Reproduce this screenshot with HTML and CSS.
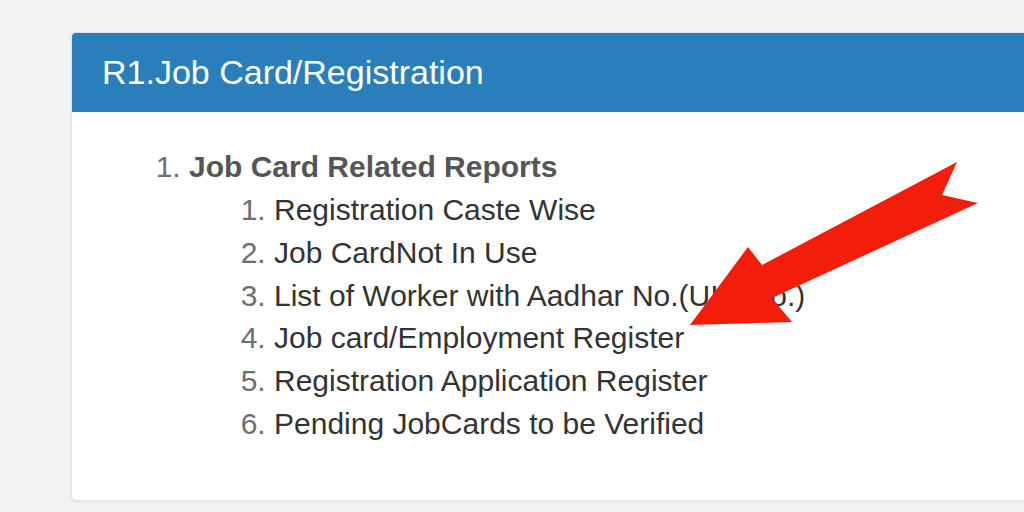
FILE: index.html
```html
<!DOCTYPE html>
<html>
<head>
<meta charset="utf-8">
<link rel="stylesheet" href="styles.css">
</head>
<body>
<div class="page">
  <div class="panel">
    <div class="panel-heading">R1.Job Card/Registration</div>
    <div class="panel-body">
      <ol class="outer">
        <li><b class="group">Job Card Related Reports</b>
          <ol class="inner">
            <li>Registration Caste Wise</li>
            <li>Job CardNot In Use</li>
            <li>List of Worker with Aadhar No.(UID No.)</li>
            <li>Job card/Employment Register</li>
            <li>Registration Application Register</li>
            <li>Pending JobCards to be Verified</li>
          </ol>
        </li>
      </ol>
    </div>
  </div>
  <svg class="arrow" width="1024" height="512" viewBox="0 0 1024 512">
    <polygon points="690,325 748,247 762,265 957,162 942,195 978,203 772,298 792,322" fill="#f21d0a"/>
  </svg>
</div>
</body>
</html>
```
FILE: styles.css
```css
html, body {
  margin: 0;
  padding: 0;
  width: 1024px;
  height: 512px;
  overflow: hidden;
  background: #f1f2f4;
  font-family: "Liberation Sans", Arial, sans-serif;
}
.page {
  position: relative;
  width: 1024px;
  height: 512px;
  padding: 32px 0 0 71px;
  box-sizing: border-box;
}
.panel {
  width: 1000px;
  background: #fff;
  border: 1px solid #e2e3e5;
  border-radius: 5px;
  box-shadow: 0 1px 3px rgba(0,0,0,0.08);
  overflow: hidden;
}
.panel-heading {
  background: #2a7fba;
  color: #fff;
  font-size: 34px;
  line-height: 38px;
  padding: 21px 32px 21px 31px;
  height: 38px;
  margin: -1px -1px 0 -1px;
}
.panel-body {
  padding: 34px 32px 33px 32px;
}
ol {
  margin: 0;
  font-size: 30px;
  line-height: 42.86px;
}
ol.outer {
  padding-left: 85px;
  margin-bottom: 21px;
}
ol.inner {
  padding-left: 85px;
}
li::marker {
  color: #6e6e6e;
}
.group {
  color: #555;
  font-weight: bold;
}
.inner li {
  color: #333;
}
.arrow {
  position: absolute;
  left: 0;
  top: 0;
  pointer-events: none;
}
```
